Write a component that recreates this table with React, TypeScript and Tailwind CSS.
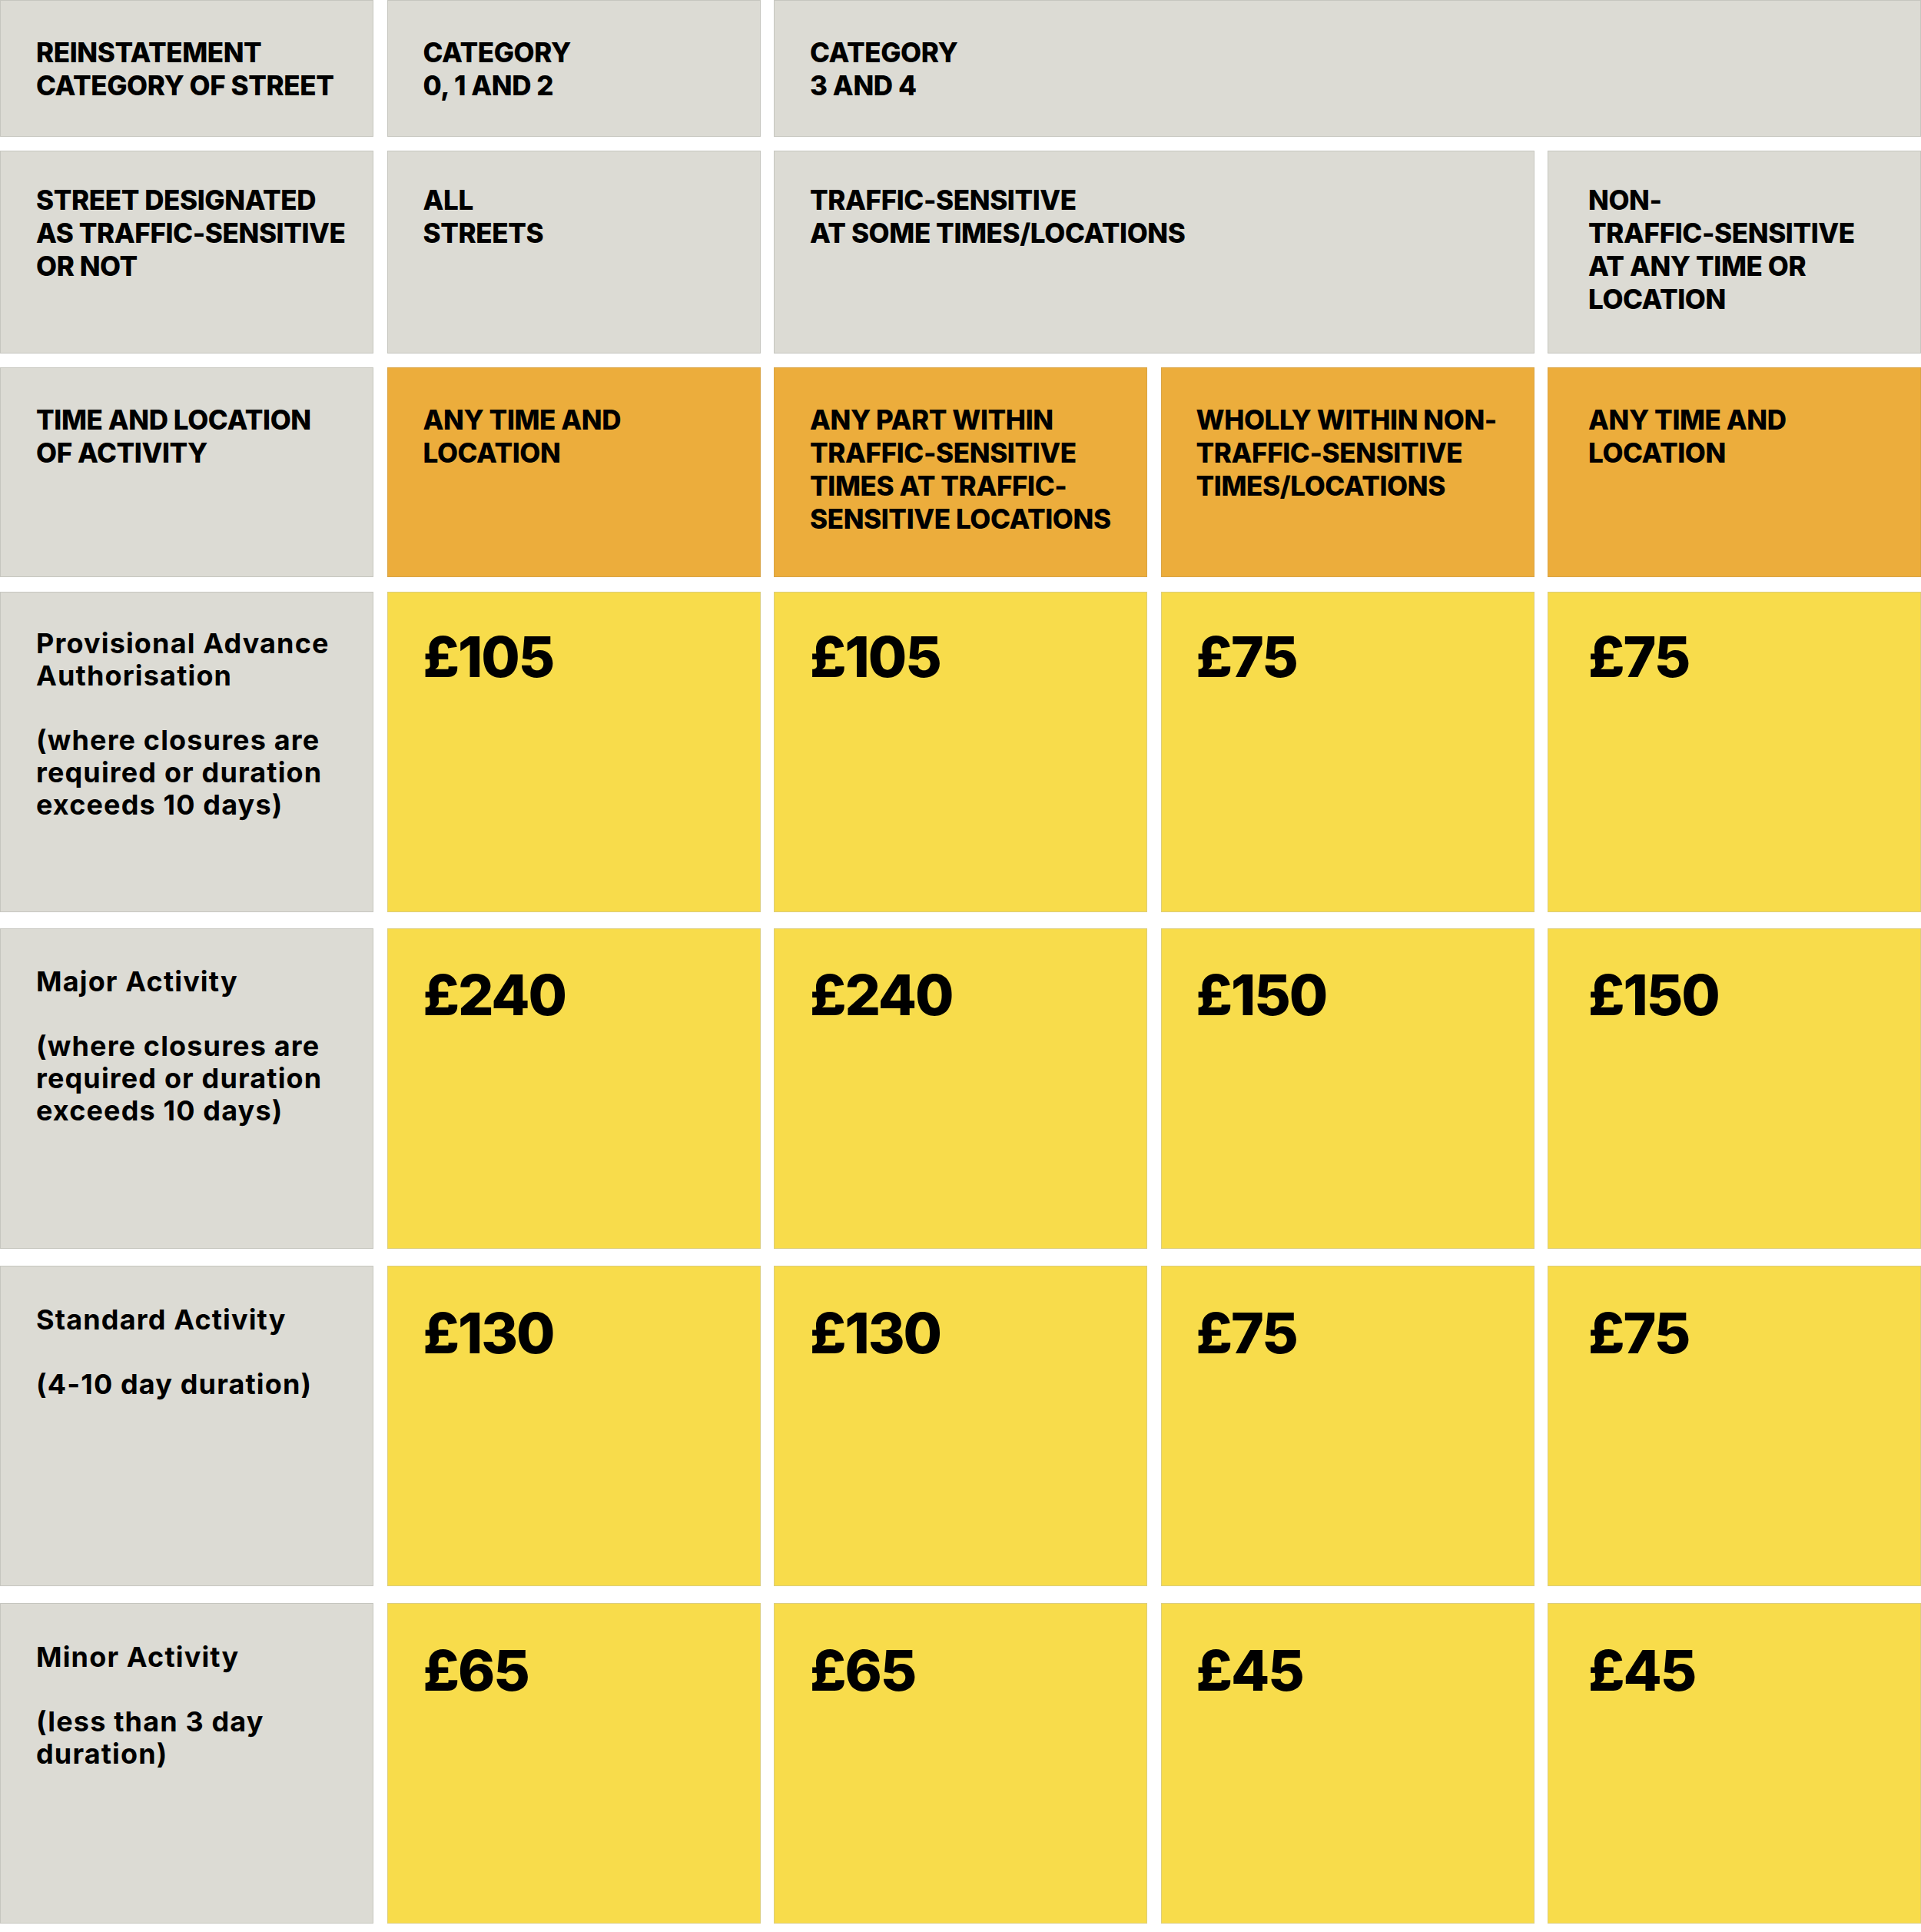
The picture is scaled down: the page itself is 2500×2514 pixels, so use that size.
import type { ReactNode } from 'react';

type Tone = 'gray' | 'orange' | 'yellow';

const toneClass: Record<Tone, string> = {
    gray: 'bg-[#dcdbd4] border-[#c6c6bf]',
    orange: 'bg-[#ecad3c] border-[#d9a445]',
    yellow: 'bg-[#f8dc4b] border-[#dccd7a]',
};

// left padding per table column (the last column sits a little further in)
const colPad = ['pl-[46px]', 'pl-[46px]', 'pl-[46px]', 'pl-[45px]', 'pl-[52px]'];

function Cell({ tone, col, span, pad, children }: { tone: Tone; col: number; span?: string; pad: string; children: ReactNode }) {
    return (
        <div className={`${toneClass[tone]} ${span ?? ''} ${pad} ${colPad[col]} border pr-4 text-black`}>
            {children}
        </div>
    );
}

// upper-case heading text, one line per entry
function Heading({ lines }: { lines: string[] }) {
    return (
        <div className="text-[35px] leading-[43px] font-extrabold tracking-[-0.4px] whitespace-nowrap">
            {lines.map((l) => (
                <div key={l}>{l}</div>
            ))}
        </div>
    );
}

function Label({ title, note }: { title: string[]; note: string[] }) {
    return (
        <div className="text-[36px] leading-[42px] font-bold tracking-[1.15px] whitespace-nowrap">
            {title.map((l) => (
                <div key={l}>{l}</div>
            ))}
            <div className="mt-[42px]">
                {note.map((l) => (
                    <div key={l}>{l}</div>
                ))}
            </div>
        </div>
    );
}

function Price({ value }: { value: string }) {
    return <div className="text-[73px] leading-[73px] font-extrabold tracking-[-2px]">{value}</div>;
}

const activities = [
    {
        title: ['Provisional Advance', 'Authorisation'],
        note: ['(where closures are', 'required or duration', 'exceeds 10 days)'],
        prices: ['£105', '£105', '£75', '£75'],
        gap: 'mt-[19px]',
        labelPad: 'pt-[45px]',
        pricePad: 'pt-[47px]',
    },
    {
        title: ['Major Activity'],
        note: ['(where closures are', 'required or duration', 'exceeds 10 days)'],
        prices: ['£240', '£240', '£150', '£150'],
        gap: 'mt-[21px]',
        labelPad: 'pt-[47px]',
        pricePad: 'pt-[49px]',
    },
    {
        title: ['Standard Activity'],
        note: ['(4-10 day duration)'],
        prices: ['£130', '£130', '£75', '£75'],
        gap: 'mt-[22px]',
        labelPad: 'pt-[48px]',
        pricePad: 'pt-[50px]',
    },
    {
        title: ['Minor Activity'],
        note: ['(less than 3 day', 'duration)'],
        prices: ['£65', '£65', '£45', '£45'],
        gap: 'mt-[22px]',
        labelPad: 'pt-[48px]',
        pricePad: 'pt-[50px]',
    },
];

const rowGrid = 'grid grid-cols-5 gap-x-[17.5px]';

export default function App() {
    return (
        <div className="w-[2500px] h-[2514px] bg-white flex flex-col font-['Inter','Liberation_Sans',sans-serif]">
            {/* Reinstatement category */}
            <div className={`${rowGrid} h-[178px]`}>
                <Cell tone="gray" col={0} pad="pt-[46px]">
                    <Heading lines={['REINSTATEMENT', 'CATEGORY OF STREET']} />
                </Cell>
                <Cell tone="gray" col={1} pad="pt-[46px]">
                    <Heading lines={['CATEGORY', '0, 1 AND 2']} />
                </Cell>
                <Cell tone="gray" col={2} span="col-span-3" pad="pt-[46px]">
                    <Heading lines={['CATEGORY', '3 AND 4']} />
                </Cell>
            </div>

            {/* Traffic-sensitive designation */}
            <div className={`${rowGrid} h-[264px] mt-[18px]`}>
                <Cell tone="gray" col={0} pad="pt-[42px]">
                    <Heading lines={['STREET DESIGNATED', 'AS TRAFFIC-SENSITIVE', 'OR NOT']} />
                </Cell>
                <Cell tone="gray" col={1} pad="pt-[42px]">
                    <Heading lines={['ALL', 'STREETS']} />
                </Cell>
                <Cell tone="gray" col={2} span="col-span-2" pad="pt-[42px]">
                    <Heading lines={['TRAFFIC-SENSITIVE', 'AT SOME TIMES/LOCATIONS']} />
                </Cell>
                <Cell tone="gray" col={4} pad="pt-[42px]">
                    <Heading lines={['NON-', 'TRAFFIC-SENSITIVE', 'AT ANY TIME OR', 'LOCATION']} />
                </Cell>
            </div>

            {/* Time and location */}
            <div className={`${rowGrid} h-[273px] mt-[18px]`}>
                <Cell tone="gray" col={0} pad="pt-[46px]">
                    <Heading lines={['TIME AND LOCATION', 'OF ACTIVITY']} />
                </Cell>
                <Cell tone="orange" col={1} pad="pt-[46px]">
                    <Heading lines={['ANY TIME AND', 'LOCATION']} />
                </Cell>
                <Cell tone="orange" col={2} pad="pt-[46px]">
                    <Heading lines={['ANY PART WITHIN', 'TRAFFIC-SENSITIVE', 'TIMES AT TRAFFIC-', 'SENSITIVE LOCATIONS']} />
                </Cell>
                <Cell tone="orange" col={3} pad="pt-[46px]">
                    <Heading lines={['WHOLLY WITHIN NON-', 'TRAFFIC-SENSITIVE', 'TIMES/LOCATIONS']} />
                </Cell>
                <Cell tone="orange" col={4} pad="pt-[46px]">
                    <Heading lines={['ANY TIME AND', 'LOCATION']} />
                </Cell>
            </div>

            {activities.map((a) => (
                <div key={a.title[0]} className={`${rowGrid} h-[417px] ${a.gap}`}>
                    <Cell tone="gray" col={0} pad={a.labelPad}>
                        <Label title={a.title} note={a.note} />
                    </Cell>
                    {a.prices.map((p, i) => (
                        <Cell key={i} tone="yellow" col={i + 1} pad={a.pricePad}>
                            <Price value={p} />
                        </Cell>
                    ))}
                </div>
            ))}
        </div>
    );
}
